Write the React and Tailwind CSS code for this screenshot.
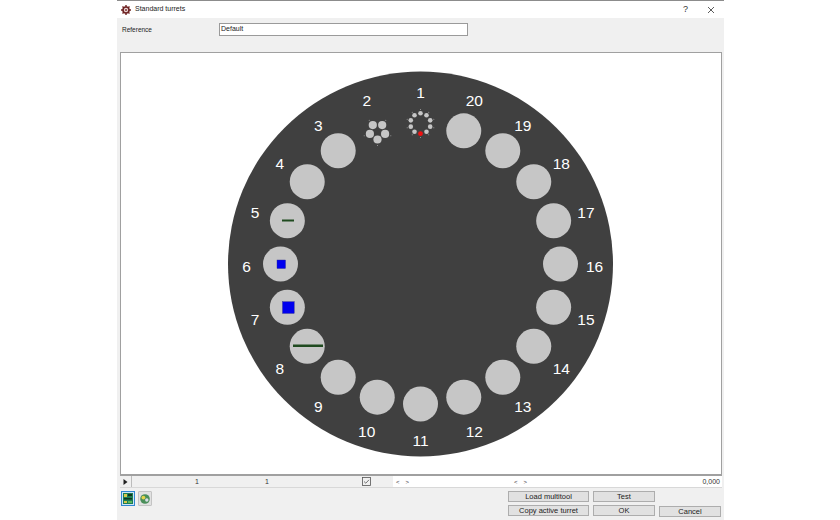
const CX = 299.5;
const CY = 211;

// station number -> angle, going anticlockwise from the top
function polar(n, r) {
  const a = ((n - 1) * 18 * Math.PI) / 180;
  return [CX - r * Math.sin(a), CY - r * Math.cos(a)];
}

const stations = Array.from({ length: 20 }, (_, i) => i + 1);

function Turret() {
  return (
    <svg width="600" height="422" viewBox="0 0 600 422" className="block">
      <circle cx={CX} cy={CY} r="192.5" fill="#404040" />
      {stations.map((n) => {
        const [x, y] = polar(n, 140);
        const [lx, ly] = polar(n, 174);
        return (
          <g key={n}>
            {n > 2 && <circle cx={x} cy={y} r="17.5" fill="#c6c6c6" />}
            <text x={lx} y={ly + 7.5} textAnchor="middle" fontSize="15.5" fill="#ffffff" fontFamily="Liberation Sans, sans-serif">
              {n}
            </text>
          </g>
        );
      })}

      {/* station 1: ring of small punches */}
      {Array.from({ length: 10 }, (_, i) => {
        const a = (i * 36 * Math.PI) / 180;
        const x = CX + 10.2 * Math.sin(a);
        const y = 70.5 + 10.2 * Math.cos(a);
        const tx = CX + 14 * Math.sin(a);
        const ty = 70.5 + 14 * Math.cos(a);
        return (
          <g key={i}>
            <circle cx={tx} cy={ty} r="0.5" fill="#a8a8a8" />
            <circle cx={x} cy={y} r={i === 0 ? 2.4 : 2.3} fill={i === 0 ? "#f01010" : "#c6c6c6"} />
          </g>
        );
      })}

      {/* station 2: five holes */}
      {Array.from({ length: 5 }, (_, i) => {
        const a = ((i * 72 + 180) * Math.PI) / 180;
        const x = 256.5 + 8 * Math.sin(a);
        const y = 78.5 - 8 * Math.cos(a);
        const tx = 256.5 + 14 * Math.sin(a);
        const ty = 78.5 - 14 * Math.cos(a);
        return (
          <g key={i}>
            <circle cx={tx} cy={ty} r="0.5" fill="#a8a8a8" />
            <circle cx={x} cy={y} r="4.1" fill="#c6c6c6" />
          </g>
        );
      })}

      <rect x="161" y="166.5" width="12" height="2" fill="#1f4a1f" />
      <rect x="156" y="207" width="8.5" height="8.5" fill="#0000ee" stroke="#2a2a90" strokeWidth="0.4" />
      <rect x="161.5" y="248.7" width="11.7" height="11.7" fill="#0000ee" stroke="#2a2a90" strokeWidth="0.4" />
      <rect x="172" y="291.5" width="30" height="2.5" fill="#1f4a1f" />
    </svg>
  );
}

function Btn({ children, className }) {
  return (
    <button className={`h-[11px] bg-[#e1e1e1] border border-[#adadad] text-[7.5px] leading-none text-[#222] ${className}`}>
      {children}
    </button>
  );
}

export default function App() {
  return (
    <div className="w-[840px] h-[520px] bg-white font-['Liberation_Sans',sans-serif] overflow-hidden">
      <div className="ml-[117px] w-[607px] h-[520px] bg-[#f0f0f0] border-t border-[#8c8c8c] flex flex-col">
        {/* title bar */}
        <div className="h-[17px] bg-white flex items-center pl-[4px] pr-[7px] shrink-0">
          <svg width="10" height="10" viewBox="0 0 10 10">
            <circle cx="5" cy="5" r="3.8" fill="#6e2222" />
            <path d="M5 0V10M0 5H10M1.5 1.5L8.5 8.5M8.5 1.5L1.5 8.5" stroke="#6e2222" strokeWidth="1.4" />
            <circle cx="5" cy="5" r="2.2" fill="#e9d4d4" />
            <circle cx="5" cy="5" r="0.9" fill="#6e2222" />
          </svg>
          <span className="ml-[4px] text-[7px] text-[#222]">Standard turrets</span>
          <span className="ml-auto text-[9px] text-[#333] mr-[19px]">?</span>
          <svg width="8" height="8" viewBox="0 0 8 8" stroke="#333" strokeWidth="0.8" className="mr-[2px]">
            <path d="M1 1L7 7M7 1L1 7" />
          </svg>
        </div>

        {/* reference row */}
        <div className="h-[34px] shrink-0 flex pt-[5px] pl-[5px]">
          <span className="w-[97px] text-[6.5px] leading-[12px] mt-[1px] text-[#222]">Reference</span>
          <div className="w-[249px] h-[13px] bg-white border border-[#9a9a9a] text-[7px] leading-[10px] pl-[1px] text-[#222]">
            Default
          </div>
        </div>

        {/* canvas */}
        <div className="ml-[3px] mr-[2px] h-[424px] shrink-0 bg-white border border-[#a0a0a0] border-b-2 overflow-hidden">
          <Turret />
        </div>

        {/* status strip */}
        <div className="ml-[3px] mr-[2px] h-[12px] shrink-0 flex items-center text-[7px] text-[#333] border-b border-[#d8d8d8]">
          <div className="w-[12px] h-full flex items-center justify-center border-r border-[#bcbcbc]">
            <svg width="5" height="6" viewBox="0 0 5 6"><path d="M0.5 0L4.5 3L0.5 6Z" fill="#222" /></svg>
          </div>
          <span className="w-[130px] text-center pt-[1px]">1</span>
          <span className="w-[10px] text-center pt-[1px]">1</span>
          <div className="w-[121px] flex justify-end pr-[22px]">
            <svg width="9" height="9" viewBox="0 0 9 9" fill="none" stroke="#555" strokeWidth="0.8">
              <rect x="0.5" y="0.5" width="8" height="8" />
              <path d="M2 4.5L3.8 6.2L7 2.8" />
            </svg>
          </div>
          <div className="flex-1 h-full bg-white flex items-center pl-[3px] pr-[2px] pt-[1px]">
            <span className="w-[118px] text-[6px] tracking-[6px]">&lt;&gt;</span>
            <span className="text-[6px] tracking-[6px]">&lt;&gt;</span>
            <span className="ml-auto">0,000</span>
          </div>
        </div>

        {/* bottom buttons */}
        <div className="flex-1 flex pl-[4px] pt-[3px]">
          <div className="flex gap-[3px] items-start">
            <div className="w-[14px] h-[15px] bg-[#cde4f7] border border-[#2f86d0] flex items-center justify-center">
              <svg width="10" height="11" viewBox="0 0 10 11">
                <rect width="10" height="11" fill="#1b7d55" />
                <rect x="1" y="1" width="3" height="3" fill="#d8c84a" />
                <rect x="5" y="1" width="4" height="2" fill="#12361f" />
                <rect x="1" y="5" width="8" height="1.5" fill="#12361f" />
                <rect x="1" y="8" width="3" height="2" fill="#d8c84a" />
                <rect x="5" y="8" width="4" height="2" fill="#5cb85c" />
              </svg>
            </div>
            <div className="w-[14px] h-[15px] bg-[#e1e1e1] border border-[#c4c4c4] rounded-[1px] flex items-center justify-center">
              <svg width="10" height="10" viewBox="0 0 10 10">
                <circle cx="5" cy="5" r="4.8" fill="#4a8f5a" />
                <circle cx="3.4" cy="3.6" r="1.9" fill="#e6d44a" />
                <circle cx="6.8" cy="6" r="1.7" fill="#d9dfe8" />
              </svg>
            </div>
          </div>
          <div className="ml-[356px] grid grid-cols-[81px_62px_62px] gap-x-[4px] gap-y-[3px] content-start">
            <Btn>Load multitool</Btn>
            <Btn>Test</Btn>
            <span />
            <Btn>Copy active turret</Btn>
            <Btn>OK</Btn>
            <Btn className="mt-[1px]">Cancel</Btn>
          </div>
        </div>
      </div>
    </div>
  );
}
